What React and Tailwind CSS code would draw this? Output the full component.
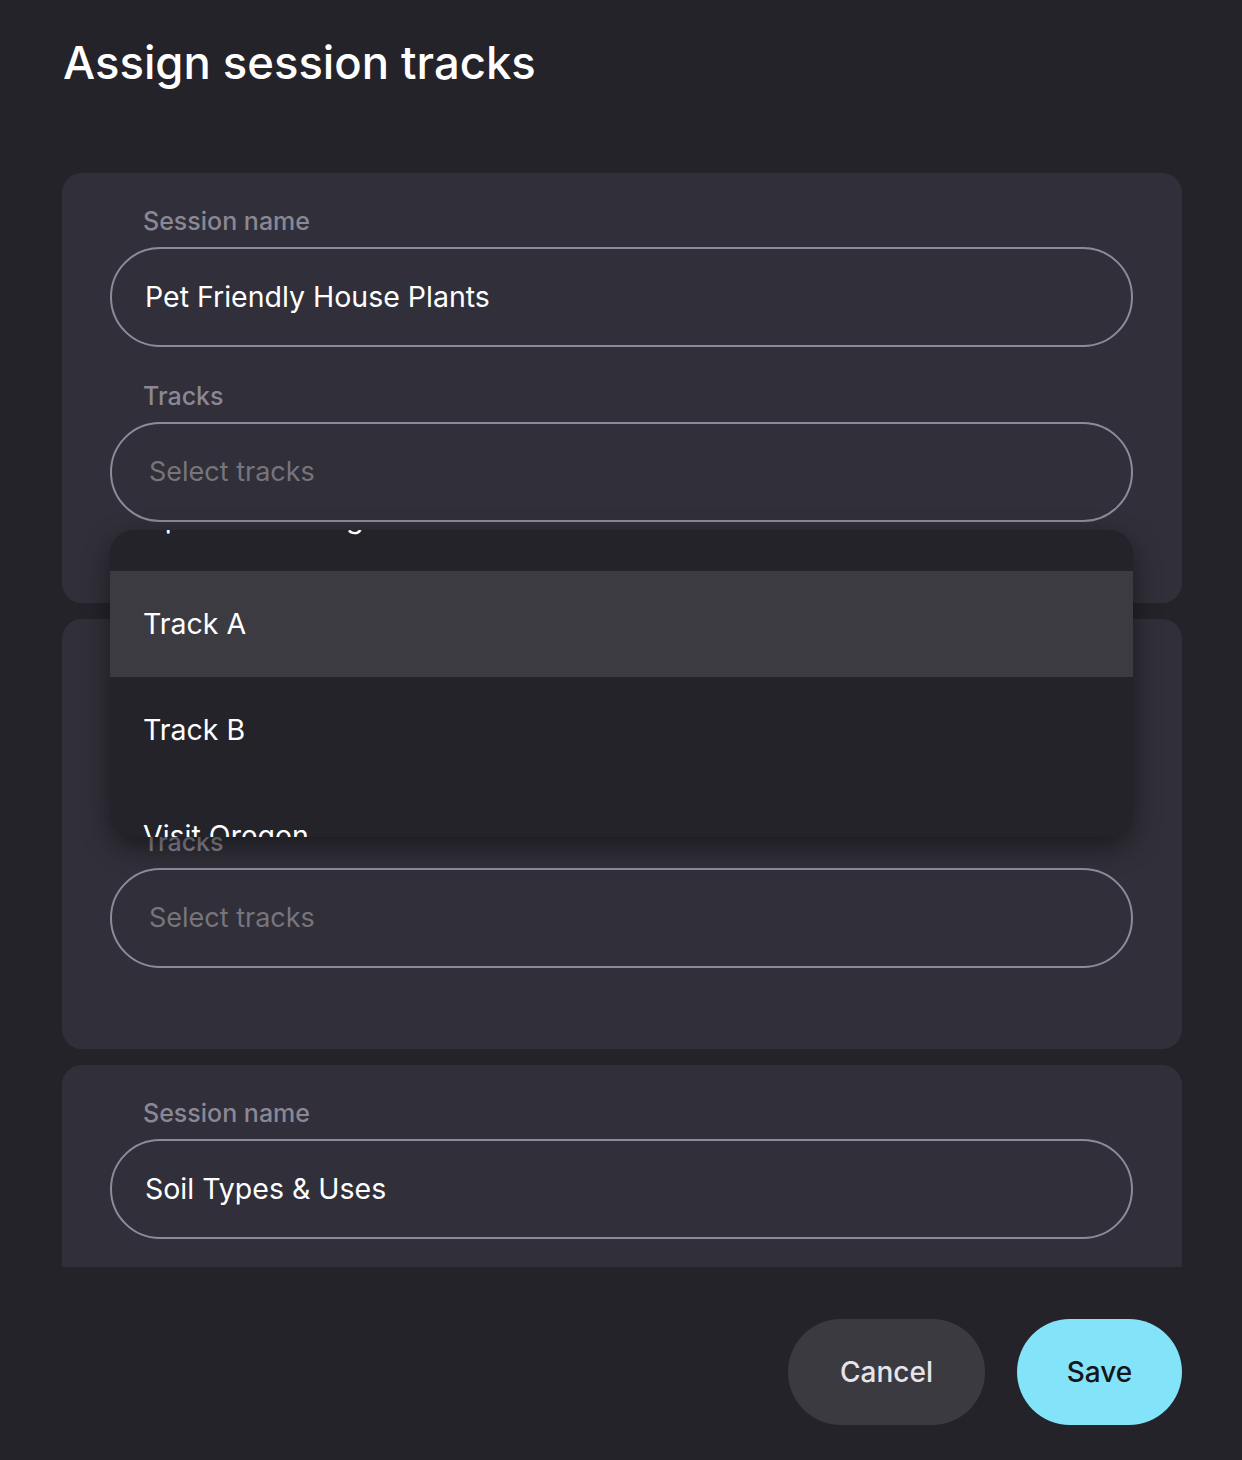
import React from 'react';

const font = { fontFamily: 'Inter, "Noto Sans", sans-serif' };

function Field({ label, value, placeholder, children }) {
  return (
    <div className="relative">
      <div className="pl-[33px] mb-[10px] text-[25px] leading-[32px] font-medium text-[#8b8794]">{label}</div>
      <div className="h-[100px] rounded-full border-2 border-[#8e8a99] flex items-center">
        {value ? (
          <span className="pl-[33px] text-[28.5px] text-white">{value}</span>
        ) : (
          <span className="pl-[37px] text-[27px] text-[#77757c]">{placeholder}</span>
        )}
      </div>
      {children}
    </div>
  );
}

function TrackMenu() {
  const items = ['Open Gardening', 'Track A', 'Track B', 'Visit Oregon'];
  return (
    <div className="absolute left-0 right-0 top-[calc(100%+8px)] z-10 h-[307px] overflow-hidden rounded-3xl bg-[#25232a] shadow-[0_10px_28px_rgba(0,0,0,0.45)]">
      <div className="-mt-[65px]">
        {items.map((item) => (
          <div
            key={item}
            className={
              'h-[106px] flex items-center pl-[33px] text-[28.5px] text-white ' +
              (item === 'Track A' ? 'bg-[#3c3b42]' : '')
            }
          >
            {item}
          </div>
        ))}
      </div>
    </div>
  );
}

export default function App() {
  return (
    <div className="w-[1242px] h-[1460px] bg-[#25232a] flex flex-col" style={font}>
      {/* Header */}
      <div className="px-[63px] pt-[35px] h-[173px]">
        <h1 className="text-[45.4px] leading-[56px] font-medium text-white">Assign session tracks</h1>
      </div>

      {/* Sessions */}
      <div className="ml-[62px] mr-[60px] h-[1094px] overflow-hidden flex flex-col gap-4">
        <div className="shrink-0 rounded-[20px] bg-[#312f39] pl-12 pr-[49px] pt-8 pb-[81px] flex flex-col gap-[33px]">
          <Field label="Session name" value="Pet Friendly House Plants" />
          <Field label="Tracks" placeholder="Select tracks">
            <TrackMenu />
          </Field>
        </div>
        <div className="shrink-0 rounded-[20px] bg-[#312f39] pl-12 pr-[49px] pt-8 pb-[81px] flex flex-col gap-[33px]">
          <Field label="Session name" value="Organic Gardening Basics" />
          <Field label="Tracks" placeholder="Select tracks" />
        </div>
        <div className="shrink-0 rounded-[20px] bg-[#312f39] pl-12 pr-[49px] pt-8 pb-[81px] flex flex-col gap-[33px]">
          <Field label="Session name" value="Soil Types & Uses" />
          <Field label="Tracks" placeholder="Select tracks" />
        </div>
      </div>

      {/* Footer */}
      <div className="flex justify-end gap-8 pr-[60px] pt-[52px]">
        <button className="w-[197px] h-[106px] rounded-full bg-[#3b3a41] text-[28px] font-medium text-[#e6e4ea]">Cancel</button>
        <button className="w-[165px] h-[106px] rounded-full bg-[#82e3f9] text-[28px] font-medium text-[#16161a]">Save</button>
      </div>
    </div>
  );
}
